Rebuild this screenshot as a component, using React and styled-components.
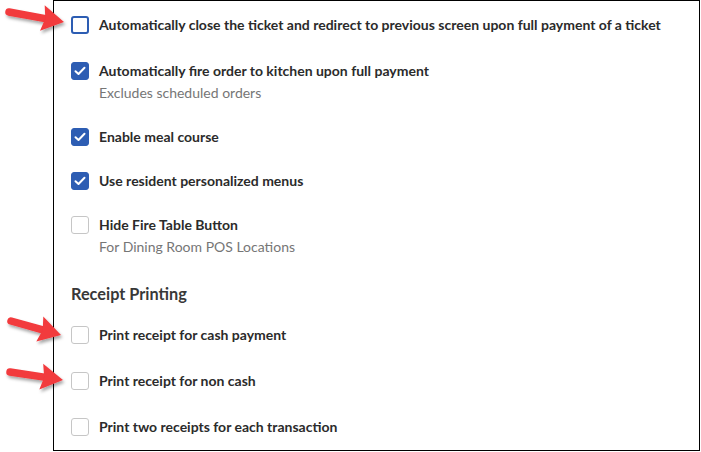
import React from "react";
import styled, { createGlobalStyle } from "styled-components";

const Global = createGlobalStyle`
  html, body {
    margin: 0;
    padding: 0;
    background: #fff;
  }
  body {
    font-family: Lato, "Open Sans", sans-serif;
    color: #2e2e2e;
  }
`;

const Page = styled.div`
  position: relative;
  width: 701px;
  height: 452px;
  overflow: hidden;
`;

const Panel = styled.div`
  box-sizing: border-box;
  margin-left: 53px;
  width: 647px;
  height: 451px;
  border: 1px solid #000;
  padding: 14px 17px 0 17px;
  display: flex;
  flex-direction: column;
`;

const Row = styled.div`
  display: flex;
  align-items: flex-start;
  gap: 10px;
  margin-top: ${(p) => p.$space || 0}px;
`;

const Box = styled.div`
  box-sizing: border-box;
  flex: none;
  width: 18px;
  height: 18px;
  margin-top: 1px;
  border-radius: 3px;
  display: flex;
  align-items: center;
  justify-content: center;
  background: ${(p) => (p.$checked ? "#2d5db3" : "#fff")};
  border: ${(p) =>
    p.$checked
      ? "1px solid #2d5db3"
      : p.$focus
      ? "2px solid #2d5db3"
      : "1px solid #c6c6c6"};
`;

const Texts = styled.div`
  display: flex;
  flex-direction: column;
`;

const Label = styled.div`
  font-size: 14px;
  font-weight: 700;
  line-height: 20px;
  color: #2b2b2b;
  white-space: nowrap;
`;

const Sub = styled.div`
  font-size: 14px;
  line-height: 20px;
  margin-top: 2px;
  color: #767676;
`;

const Heading = styled.div`
  font-size: 16.3px;
  font-weight: 700;
  line-height: 22px;
  color: #383838;
  margin-top: 26px;
`;

const Overlay = styled.svg`
  position: absolute;
  left: 0;
  top: 0;
  pointer-events: none;
`;

function Check() {
  return (
    <svg width="12" height="10" viewBox="0 0 12 10">
      <path
        d="M1.5 5.2 L4.5 8 L10.5 1.8"
        fill="none"
        stroke="#fff"
        strokeWidth="2"
        strokeLinecap="round"
        strokeLinejoin="round"
      />
    </svg>
  );
}

function Option({ label, sub, checked, focus, space }) {
  return (
    <Row $space={space}>
      <Box $checked={checked} $focus={focus}>
        {checked && <Check />}
      </Box>
      <Texts>
        <Label>{label}</Label>
        {sub && <Sub>{sub}</Sub>}
      </Texts>
    </Row>
  );
}

function Arrow({ tail, tip }) {
  const dx = tip[0] - tail[0];
  const dy = tip[1] - tail[1];
  const len = Math.hypot(dx, dy);
  const ux = dx / len;
  const uy = dy / len;
  const px = -uy;
  const py = ux;
  const headL = 22;
  const headW = 26;
  const neck = [tip[0] - ux * headL, tip[1] - uy * headL];
  const back = [neck[0] + ux * 3, neck[1] + uy * 3];
  const pts = [
    tip,
    [neck[0] + px * headW / 2, neck[1] + py * headW / 2],
    back,
    [neck[0] - px * headW / 2, neck[1] - py * headW / 2],
  ]
    .map((p) => p.join(","))
    .join(" ");
  return (
    <g filter="url(#shadow)">
      <line
        x1={tail[0]}
        y1={tail[1]}
        x2={back[0]}
        y2={back[1]}
        stroke="#f23a3d"
        strokeWidth="7.5"
        strokeLinecap="round"
      />
      <polygon points={pts} fill="#f23a3d" />
    </g>
  );
}

export default function App() {
  return (
    <Page>
      <Global />
      <Panel>
        <Option
          focus
          label="Automatically close the ticket and redirect to previous screen upon full payment of a ticket"
        />
        <Option
          checked
          space={26}
          label="Automatically fire order to kitchen upon full payment"
          sub="Excludes scheduled orders"
        />
        <Option checked space={24} label="Enable meal course" />
        <Option checked space={24} label="Use resident personalized menus" />
        <Option
          space={24}
          label="Hide Fire Table Button"
          sub="For Dining Room POS Locations"
        />
        <Heading>Receipt Printing</Heading>
        <Option space={20} label="Print receipt for cash payment" />
        <Option space={26} label="Print receipt for non cash" />
        <Option space={26} label="Print two receipts for each transaction" />
      </Panel>
      <Overlay width="701" height="452" viewBox="0 0 701 452">
        <defs>
          <filter id="shadow" x="-20%" y="-40%" width="150%" height="200%">
            <feDropShadow dx="1.5" dy="2.5" stdDeviation="1.5" floodColor="#000" floodOpacity="0.35" />
          </filter>
        </defs>
        <Arrow tail={[9, 12]} tip={[64, 22]} />
        <Arrow tail={[11, 321]} tip={[61, 335]} />
        <Arrow tail={[10, 372]} tip={[63, 380]} />
      </Overlay>
    </Page>
  );
}
